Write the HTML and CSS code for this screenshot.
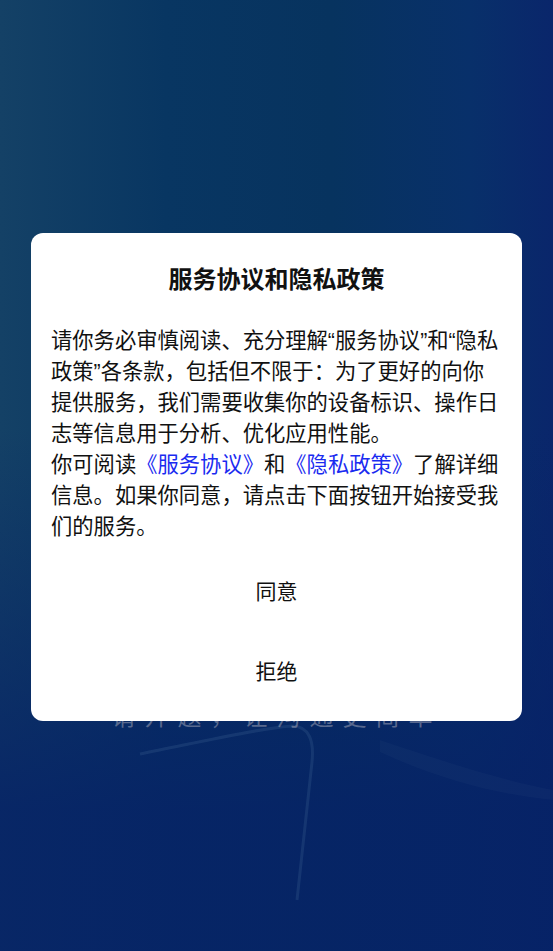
FILE: index.html
```html
<!DOCTYPE html>
<html>
<head>
  <meta charset="UTF-8">
  <title>服务协议和隐私政策</title>
  <link rel="stylesheet" href="styles.css">
</head>
<body>
  <div class="splash">
    <!-- 启动页背景装饰 -->
    <svg class="splash-deco" width="553" height="951" viewBox="0 0 553 951">
      <path d="M140 754 C 200 742, 260 728, 292 726 C 310 726, 314 742, 312 762 L 297 900" fill="none" stroke="rgba(120,170,200,0.13)" stroke-width="3"/>
      <path d="M380 740 C 440 760, 500 780, 553 790 L 553 800 C 500 795, 440 780, 380 752 Z" fill="rgba(255,255,255,0.025)"/>
    </svg>
    <div class="splash-slogan">请开题，让沟通更简单</div>

    <div class="dialog">
      <h2 class="dialog-title">服务协议和隐私政策</h2>
      <p class="dialog-text">请你务必审慎阅读、充分理解“服务协议”和“隐私政策”各条款，包括但不限于：为了更好的向你提供服务，我们需要收集你的设备标识、操作日志等信息用于分析、优化应用性能。<br>你可阅读<a href="#">《服务协议》</a>和<a href="#">《隐私政策》</a>了解详细信息。如果你同意，请点击下面按钮开始接受我们的服务。</p>
      <div class="dialog-actions">
        <button id="agree">同意</button>
        <button id="reject">拒绝</button>
      </div>
    </div>
  </div>
</body>
</html>
```

FILE: styles.css
```css
html, body {
  margin: 0;
  padding: 0;
}
body {
  font-family: "Liberation Sans", "Noto Sans CJK SC", sans-serif;
  color: #111;
}
.splash {
  position: relative;
  width: 553px;
  height: 951px;
  overflow: hidden;
  background:
    linear-gradient(180deg, rgba(6,36,102,0) 0%, rgba(6,36,102,0) 45%, rgba(6,34,102,0.85) 85%),
    linear-gradient(90deg, #144166 0%, #083662 30%, #07335f 60%, #08306a 85%, #0a266b 100%);
  display: flex;
  flex-direction: column;
  align-items: center;
}
.splash-deco {
  position: absolute;
  left: 0;
  top: 0;
}
.splash-slogan {
  position: absolute;
  left: 0;
  right: 0;
  top: 697px;
  text-align: center;
  font-size: 24px;
  letter-spacing: 9px;
  color: rgba(170,170,185,0.5);
}

.dialog {
  position: relative;
  margin-top: 233px;
  width: 491px;
  box-sizing: border-box;
  padding: 31px 20px 11px;
  background: #fff;
  border-radius: 12px;
}
.dialog-title {
  margin: 0;
  font-size: 24px;
  line-height: 32px;
  font-weight: bold;
  text-align: center;
  color: #111;
}
.dialog-text {
  margin: 30px 0 0;
  font-size: 21.3px;
  line-height: 31px;
  color: #111;
}
.dialog-text a {
  color: #1a2bf0;
  text-decoration: none;
}
.dialog-actions {
  display: flex;
  flex-direction: column;
  margin-top: 7px;
}
.dialog-actions button {
  height: 80px;
  border: none;
  background: none;
  padding: 0;
  font-family: inherit;
  font-size: 21px;
  color: #111;
  cursor: pointer;
}
```
